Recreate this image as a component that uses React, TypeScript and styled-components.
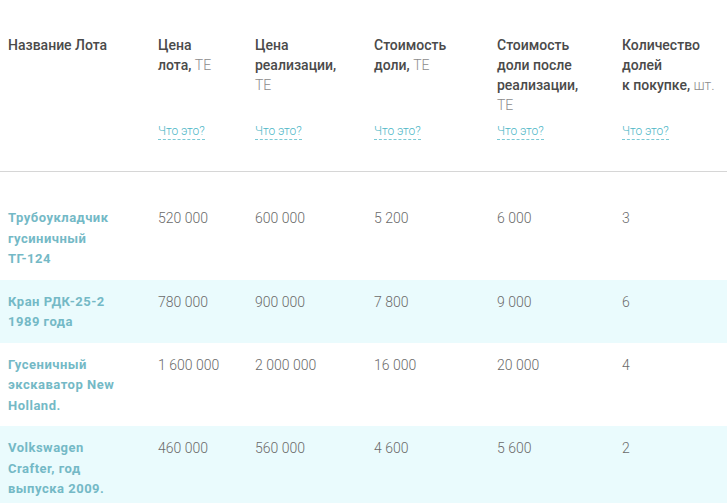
import React from "react"
import styled, {createGlobalStyle} from "styled-components"

type Lot = {
  name: string[]
  price: string
  salePrice: string
  share: string
  shareAfter: string
  count: string
}

type Column = {
  title: string[]
  unit: string
  unitOwnLine?: boolean
  width?: number
}

const columns: Column[] = [
  {title: ["Цена", "лота,"], unit: "ТЕ", width: 97},
  {title: ["Цена", "реализации,"], unit: "ТЕ", unitOwnLine: true, width: 119},
  {title: ["Стоимость", "доли,"], unit: "ТЕ", width: 123},
  {
    title: ["Стоимость", "доли после", "реализации,"],
    unit: "ТЕ",
    unitOwnLine: true,
    width: 125
  },
  {title: ["Количество", "долей", "к покупке,"], unit: "шт."}
]

const lots: Lot[] = [
  {
    name: ["Трубоукладчик", "гусиничный", "ТГ-124"],
    price: "520 000",
    salePrice: "600 000",
    share: "5 200",
    shareAfter: "6 000",
    count: "3"
  },
  {
    name: ["Кран РДК-25-2", "1989 года"],
    price: "780 000",
    salePrice: "900 000",
    share: "7 800",
    shareAfter: "9 000",
    count: "6"
  },
  {
    name: ["Гусеничный", "экскаватор New", "Holland."],
    price: "1 600 000",
    salePrice: "2 000 000",
    share: "16 000",
    shareAfter: "20 000",
    count: "4"
  },
  {
    name: ["Volkswagen", "Crafter, год", "выпуска 2009."],
    price: "460 000",
    salePrice: "560 000",
    share: "4 600",
    shareAfter: "5 600",
    count: "2"
  }
]

const GlobalStyle = createGlobalStyle`
  body {
    margin: 0;
    background: #fff;
    font-family: Roboto, "Noto Sans", sans-serif;
  }
`

const Table = styled.table`
  width: 100%;
  border-collapse: collapse;
  table-layout: fixed;
`

const HeadCell = styled.th`
  padding: 35px 8px 31px;
  text-align: left;
  vertical-align: top;
  font-size: 14px;
  font-weight: 500;
  line-height: 20px;
  color: #4a4a4a;
  border-bottom: 1px solid #d6d6d6;
`

const HeadInner = styled.div`
  display: flex;
  flex-direction: column;
  align-items: flex-start;
`

const Label = styled.div`
  min-height: 80px;
`

const Unit = styled.span`
  font-weight: 300;
  color: #8c8c8c;
`

const Hint = styled.a`
  margin-top: 9px;
  font-size: 12px;
  font-weight: 300;
  line-height: 15px;
  color: #4cb6c6;
  text-decoration: none;
  border-bottom: 1px dashed #7ccad5;
`

const Row = styled.tr<{$striped: boolean}>`
  background: ${(p) => (p.$striped ? "#eafbfd" : "#fff")};

  &:first-child td {
    padding-top: 36px;
  }
`

const Cell = styled.td`
  padding: 12px 8px 10px;
  vertical-align: top;
  font-size: 14px;
  font-weight: 300;
  line-height: 20.5px;
  color: #6a6a6a;
`

const NameCell = styled(Cell)`
  font-size: 13px;
  font-weight: 700;
  letter-spacing: 0.5px;
  color: #74b9c6;
`

const Lines = ({lines}: {lines: string[]}) => (
  <>
    {lines.map((line, i) => (
      <React.Fragment key={i}>
        {i > 0 && <br />}
        {line}
      </React.Fragment>
    ))}
  </>
)

export default function App() {
  return (
    <>
      <GlobalStyle />
      <Table>
        <colgroup>
          <col style={{width: 150}} />
          {columns.map((c, i) => (
            <col key={i} style={c.width ? {width: c.width} : undefined} />
          ))}
        </colgroup>
        <thead>
          <tr>
            <HeadCell>Название Лота</HeadCell>
            {columns.map((c, i) => (
              <HeadCell key={i}>
                <HeadInner>
                  <Label>
                    <Lines lines={c.title} />
                    {c.unitOwnLine ? <br /> : " "}
                    <Unit>{c.unit}</Unit>
                  </Label>
                  <Hint href="#">Что это?</Hint>
                </HeadInner>
              </HeadCell>
            ))}
          </tr>
        </thead>
        <tbody>
          {lots.map((lot, i) => (
            <Row key={i} $striped={i % 2 === 1}>
              <NameCell>
                <Lines lines={lot.name} />
              </NameCell>
              <Cell>{lot.price}</Cell>
              <Cell>{lot.salePrice}</Cell>
              <Cell>{lot.share}</Cell>
              <Cell>{lot.shareAfter}</Cell>
              <Cell>{lot.count}</Cell>
            </Row>
          ))}
        </tbody>
      </Table>
    </>
  )
}
